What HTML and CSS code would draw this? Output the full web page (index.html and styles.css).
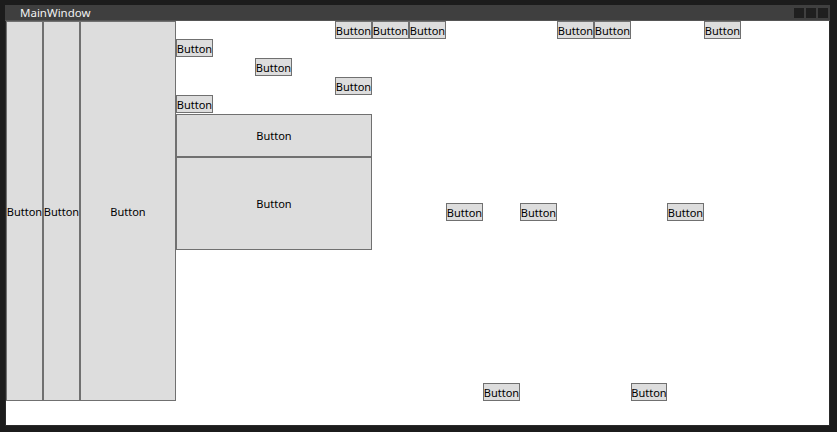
FILE: index.html
```html
<!DOCTYPE html>
<html lang="en">
  <head>
    <meta charset="UTF-8" />
    <meta name="viewport" content="width=device-width, initial-scale=1.0" />
    <title>MainWindow</title>
    <link rel="stylesheet" href="styles.css">
  </head>
  <body>
    <div class="window">
      <div class="title-bar">
        <span class="title">MainWindow</span>
        <div class="caption-buttons">
          <span class="caption-btn"></span>
          <span class="caption-btn"></span>
          <span class="caption-btn"></span>
        </div>
      </div>

      <div class="client">
        <button class="btn left-1">Button</button>
        <button class="btn left-2">Button</button>
        <button class="btn left-3">Button</button>

        <button class="btn top-1">Button</button>
        <button class="btn top-2">Button</button>
        <button class="btn top-3">Button</button>
        <button class="btn top-4">Button</button>
        <button class="btn top-5">Button</button>
        <button class="btn top-6">Button</button>

        <button class="btn step-1">Button</button>
        <button class="btn step-2">Button</button>
        <button class="btn step-3">Button</button>
        <button class="btn step-4">Button</button>

        <button class="btn big-1">Button</button>
        <button class="btn big-2">Button</button>

        <button class="btn mid-1">Button</button>
        <button class="btn mid-2">Button</button>
        <button class="btn mid-3">Button</button>

        <button class="btn bottom-1">Button</button>
        <button class="btn bottom-2">Button</button>
      </div>
    </div>
  </body>
</html>
```

FILE: styles.css
```css
* {
  margin: 0;
  padding: 0;
  box-sizing: border-box;
}

body {
  background: #1c1c1c;
  font-family: "Noto Sans", "Open Sans", sans-serif;
  font-size: 12px;
  padding: 5px 0 0 5px;
}

.window {
  width: 825px;
  height: 421px;
  background: #2a2a2a;
  border: 1px solid #2a2a2a;
  border-top: none;
  display: flex;
  flex-direction: column;
}

/* Title bar */
.title-bar {
  height: 16px;
  background: #3f3f3f;
  border-bottom: 1px solid #555555;
  display: flex;
  align-items: center;
  justify-content: space-between;
  margin: 0 -1px;
  padding: 0 2px 0 15px;
}

.title {
  color: #f2f2f2;
  font-size: 11.5px;
  line-height: 15px;
}

.caption-buttons {
  display: flex;
  gap: 2px;
}

.caption-btn {
  width: 10px;
  height: 10px;
  background: #1f1f1f;
}

/* Client area: buttons placed on a WPF-like grid */
.client {
  width: 823px;
  height: 404px;
  background: #ffffff;
  display: grid;
  grid-template-columns: 37px 37px 96px 37px 42px 37px 43px 37px 37px 37px 37px 37px 37px 37px 37px 36px 37px 37px 88px;
  grid-template-rows: 18px 18px 1px 18px 1px 18px 18px 1px 43px 46px 18px 29px 133px 18px 24px;
}

.btn {
  background: #dddddd;
  border: 1px solid #707070;
  color: #000000;
  font-family: inherit;
  font-size: 11px;
  white-space: nowrap;
  overflow: hidden;
  display: flex;
  align-items: center;
  justify-content: center;
}

.left-1 { grid-column: 1 / 2; grid-row: 1 / 15; }
.left-2 { grid-column: 2 / 3; grid-row: 1 / 15; }
.left-3 { grid-column: 3 / 4; grid-row: 1 / 15; }

.top-1 { grid-column: 8 / 9; grid-row: 1 / 2; }
.top-2 { grid-column: 9 / 10; grid-row: 1 / 2; }
.top-3 { grid-column: 10 / 11; grid-row: 1 / 2; }
.top-4 { grid-column: 14 / 15; grid-row: 1 / 2; }
.top-5 { grid-column: 15 / 16; grid-row: 1 / 2; }
.top-6 { grid-column: 18 / 19; grid-row: 1 / 2; }

.step-1 { grid-column: 4 / 5; grid-row: 2 / 3; }
.step-2 { grid-column: 6 / 7; grid-row: 4 / 5; }
.step-3 { grid-column: 8 / 9; grid-row: 6 / 7; }
.step-4 { grid-column: 4 / 5; grid-row: 7 / 8; }

.big-1 { grid-column: 4 / 9; grid-row: 9 / 10; }
.big-2 { grid-column: 4 / 9; grid-row: 10 / 13; }

.mid-1 { grid-column: 11 / 12; grid-row: 11 / 12; }
.mid-2 { grid-column: 13 / 14; grid-row: 11 / 12; }
.mid-3 { grid-column: 17 / 18; grid-row: 11 / 12; }

.bottom-1 { grid-column: 12 / 13; grid-row: 14 / 15; }
.bottom-2 { grid-column: 16 / 17; grid-row: 14 / 15; }
```
